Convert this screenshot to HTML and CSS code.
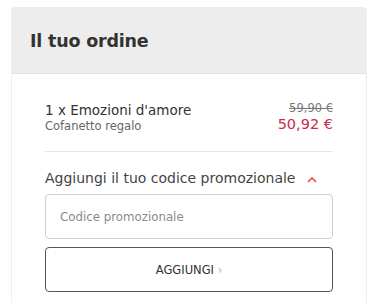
FILE: index.html
```html
<!DOCTYPE html>
<html lang="it">
<head>
<meta charset="utf-8">
<link rel="stylesheet" href="styles.css">
</head>
<body>
<div class="card">
  <div class="card-head"><h2 class="title">Il tuo ordine</h2></div>
  <div class="card-body">
    <div class="item">
      <div class="item-info">
        <div class="item-name">1 x Emozioni d'amore</div>
        <div class="item-sub">Cofanetto regalo</div>
      </div>
      <div class="item-price">
        <div class="old">59,90 €</div>
        <div class="new">50,92 €</div>
      </div>
    </div>
    <div class="promo">
      <div class="promo-toggle">
        <span>Aggiungi il tuo codice promozionale</span>
        <svg class="chev" width="10" height="7" viewBox="0 0 10 7"><path d="M1 6 L5 2 L9 6" fill="none" stroke="#e0533b" stroke-width="1.6"/></svg>
      </div>
      <input class="promo-input" type="text" placeholder="Codice promozionale">
      <button class="promo-btn">AGGIUNGI <span class="arr">›</span></button>
    </div>
  </div>
</div>
</body>
</html>
```
FILE: styles.css
```css
html, body { margin: 0; padding: 0; background: #fff; }
body { font-family: "DejaVu Sans", sans-serif; color: #333; }
.card {
  margin: 7px 0 0 11px;
  width: 356px;
  border: 1px solid #eeeeee;
  border-radius: 3px;
  box-sizing: border-box;
}
.card-head {
  background: #ededed;
  height: 66px;
  display: flex;
  align-items: center;
  padding-left: 18px;
  border-bottom: 1px solid #e2e2e2;
  box-sizing: border-box;
}
.title { margin: 0; font-size: 17.5px; font-weight: bold; color: #333; letter-spacing: -0.2px; }
.card-body { padding: 0 33px; }
.item {
  display: flex;
  justify-content: space-between;
  padding: 27px 0 17px;
  border-bottom: 1px solid #e6e6e6;
}
.item-name { font-size: 13.5px; line-height: 18px; color: #333; }
.item-sub { font-size: 11.5px; line-height: 15px; color: #666; }
.item-price { text-align: right; }
.old { font-size: 11.5px; line-height: 14px; color: #777; text-decoration: line-through; }
.new { font-size: 14.5px; line-height: 18px; color: #cc2a4c; }
.promo { padding-top: 16px; border-bottom: 1px solid #e6e6e6; padding-bottom: 11px; }
.promo-toggle { display: flex; align-items: center; gap: 12px; font-size: 14px; line-height: 20px; color: #444; }
.chev { margin-top: 3px; }
.promo-input {
  display: block;
  margin-top: 6px;
  width: 100%;
  height: 45px;
  box-sizing: border-box;
  border: 1px solid #cfcfcf;
  border-radius: 4px;
  padding: 0 14px;
  font-family: "DejaVu Sans", sans-serif;
  font-size: 11.8px;
  color: #333;
}
.promo-input::placeholder { color: #8a8a8a; }
.promo-btn {
  display: block;
  margin-top: 8px;
  width: 100%;
  height: 45px;
  box-sizing: border-box;
  background: #fff;
  border: 1px solid #555;
  border-radius: 4px;
  font-family: "DejaVu Sans", sans-serif;
  font-size: 11.5px;
  color: #333;
}
.arr { color: #bbb; }
```
